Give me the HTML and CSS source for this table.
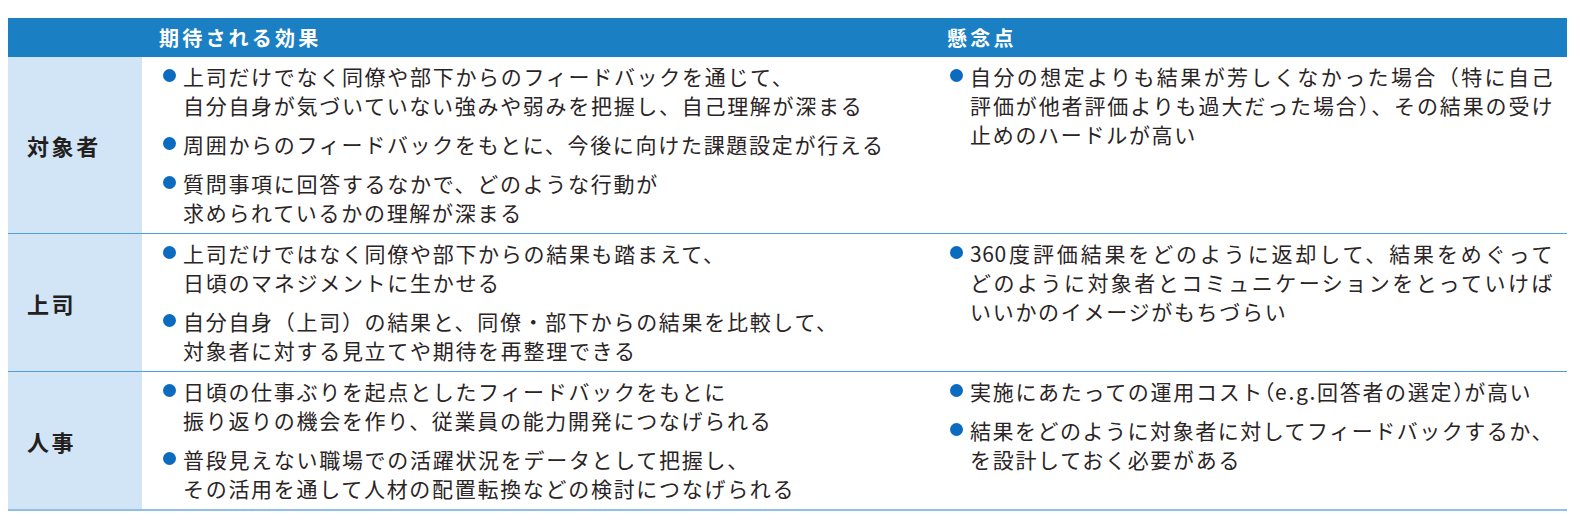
FILE: index.html
```html
<!DOCTYPE html>
<html lang="ja">
<head>
<meta charset="utf-8">
<title>360度評価</title>
<link rel="stylesheet" href="styles.css">
</head>
<body>
<div class="table">
  <div class="head">
    <div class="hcell"></div>
    <div class="hcell">期待される効果</div>
    <div class="hcell">懸念点</div>
  </div>

  <div class="row">
    <div class="label">対象者</div>
    <div class="cell">
      <ul class="list">
        <li><span class="dot"></span><span class="txt">上司だけでなく同僚や部下からのフィードバックを通じて、<br>自分自身が気づいていない強みや弱みを把握し、自己理解が深まる</span></li>
        <li><span class="dot"></span><span class="txt">周囲からのフィードバックをもとに、今後に向けた課題設定が行える</span></li>
        <li><span class="dot"></span><span class="txt">質問事項に回答するなかで、どのような行動が<br>求められているかの理解が深まる</span></li>
      </ul>
    </div>
    <div class="cell c3">
      <ul class="list">
        <li><span class="dot"></span><span class="txt"><span class="j">自分の想定よりも結果が芳しくなかった場合（特に自己</span><span class="j">評価が他者評価よりも過大だった場合）、その結果の受け</span><span class="l">止めのハードルが高い</span></span></li>
      </ul>
    </div>
  </div>

  <div class="row">
    <div class="label">上司</div>
    <div class="cell">
      <ul class="list">
        <li><span class="dot"></span><span class="txt">上司だけではなく同僚や部下からの結果も踏まえて、<br>日頃のマネジメントに生かせる</span></li>
        <li><span class="dot"></span><span class="txt">自分自身（上司）の結果と、同僚・部下からの結果を比較して、<br>対象者に対する見立てや期待を再整理できる</span></li>
      </ul>
    </div>
    <div class="cell c3">
      <ul class="list">
        <li><span class="dot"></span><span class="txt"><span class="j">360度評価結果をどのように返却して、結果をめぐって</span><span class="j">どのように対象者とコミュニケーションをとっていけば</span><span class="l">いいかのイメージがもちづらい</span></span></li>
      </ul>
    </div>
  </div>

  <div class="row last">
    <div class="label">人事</div>
    <div class="cell">
      <ul class="list">
        <li><span class="dot"></span><span class="txt">日頃の仕事ぶりを起点としたフィードバックをもとに<br>振り返りの機会を作り、従業員の能力開発につなげられる</span></li>
        <li><span class="dot"></span><span class="txt">普段見えない職場での活躍状況をデータとして把握し、<br>その活用を通して人材の配置転換などの検討につなげられる</span></li>
      </ul>
    </div>
    <div class="cell c3">
      <ul class="list">
        <li><span class="dot"></span><span class="txt nw">実施にあたっての運用コスト<span class="hw">（</span>e.g.回答者の選定<span class="hw">）</span>が高い</span></li>
        <li><span class="dot"></span><span class="txt"><span class="j">結果をどのように対象者に対してフィードバックするか、</span><span class="l">を設計しておく必要がある</span></span></li>
      </ul>
    </div>
  </div>
</div>
</body>
</html>
```

FILE: styles.css
```css
* { box-sizing: border-box; }
html, body { background: #ffffff; }
body {
  margin: 0;
  font-family: "Noto Sans CJK JP", "Noto Sans", sans-serif;
  color: #2a2425;
}
.table {
  margin: 18px 0 0 8px;
  width: 1559px;
}
.head, .row {
  display: grid;
  grid-template-columns: 134px 788px 1fr;
}
.head {
  background: #1a80c3;
  height: 39px;
}
.hcell {
  color: #ffffff;
  font-weight: 700;
  font-size: 20px;
  letter-spacing: 3.2px;
  line-height: 39px;
  padding-left: 17px;
}
.row {
  border-bottom: 1px solid #4d9fdf;
}
.row.last {
  border-bottom: 2px solid #8fc1e8;
}
.label {
  background: #d2e5f6;
  display: flex;
  align-items: center;
  padding-left: 19px;
  font-size: 22px;
  font-weight: 700;
  letter-spacing: 2.6px;
  color: #231f20;
}
.cell {
  padding: 5px 14px 6px 21px;
}
.cell.c3 {
  padding-left: 20px;
}
.list {
  list-style: none;
  margin: 0;
  padding: 0;
  display: flex;
  flex-direction: column;
  gap: 10px;
}
.list li {
  display: flex;
  align-items: flex-start;
  font-size: 21px;
  line-height: 29px;
  letter-spacing: 1.7px;
}
.dot {
  flex: none;
  width: 13px;
  height: 13px;
  border-radius: 50%;
  background: #0b6bbf;
  margin-top: 7px;
  margin-right: 7px;
}
.txt {
  flex: 1;
  min-width: 0;
}
.nw {
  white-space: nowrap;
}
.hw {
  font-feature-settings: "halt";
  letter-spacing: 0.5px;
}
.j {
  display: block;
  white-space: nowrap;
  text-align: justify;
  text-align-last: justify;
  letter-spacing: 0.6px;
}
.l {
  display: block;
}
```
